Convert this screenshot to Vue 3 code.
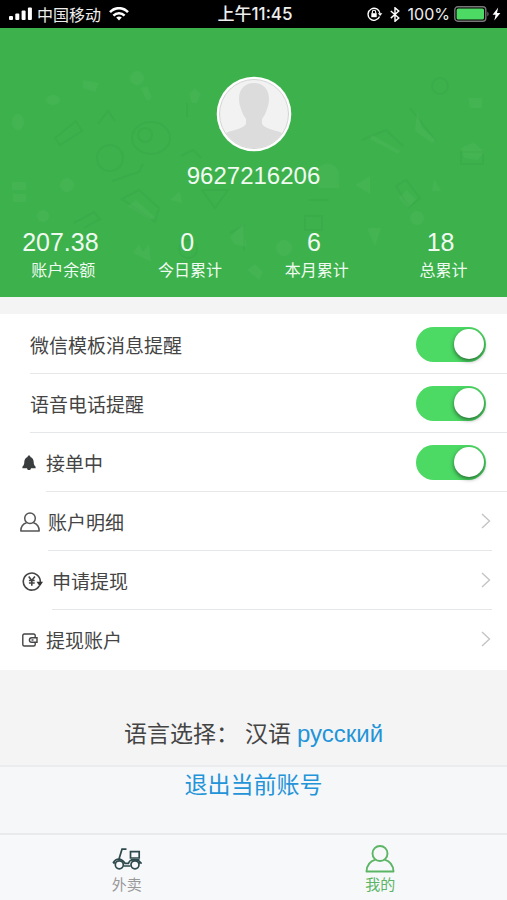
<script setup>
import { ref, reactive } from 'vue'

const stats = [
  { value: '207.38', label: '账户余额' },
  { value: '0', label: '今日累计' },
  { value: '6', label: '本月累计' },
  { value: '18', label: '总累计' },
]

const toggles = reactive([
  { id: 'wechat', label: '微信模板消息提醒', on: true },
  { id: 'voice', label: '语音电话提醒', on: true },
  { id: 'orders', label: '接单中', on: true, icon: 'bell' },
])

const links = [
  { id: 'detail', label: '账户明细', icon: 'person' },
  { id: 'withdraw', label: '申请提现', icon: 'yen' },
  { id: 'account', label: '提现账户', icon: 'wallet' },
]

const tab = ref('mine')
</script>

<template>
  <div class="page">
    <div class="status">
      <div class="status-side">
        <svg class="signal" width="24" height="14" viewBox="0 0 24 14" fill="#fff">
          <rect x="0" y="9" width="4" height="4" rx="1" />
          <rect x="6.3" y="6.5" width="4" height="6.5" rx="1" />
          <rect x="12.6" y="3.5" width="4" height="9.5" rx="1" />
          <rect x="18.9" y="0.5" width="4" height="12.5" rx="1" />
        </svg>
        <span class="carrier">中国移动</span>
        <svg class="wifi" width="20" height="14" viewBox="0 0 20 14" fill="none" stroke="#fff" stroke-width="2.5">
          <path d="M1 5.2C6-.2 14-.2 19 5.2" />
          <path d="M4.4 8.6c3.2-3.3 8-3.3 11.2 0" />
          <path d="M7.2 10.6c1.6-1.5 4-1.5 5.6 0L10 13.6z" fill="#fff" stroke="none" />
        </svg>
      </div>
      <div class="time">上午11:45</div>
      <div class="status-side end">
        <svg width="16" height="14" viewBox="0 0 16 14" fill="none" stroke="#fff">
          <path d="M12.6 9.6A6 6 0 1 1 13 6.5" stroke-width="1.4" />
          <path d="M10.8 6.2h4.6L13.1 9z" fill="#fff" stroke="none" />
          <rect x="4.3" y="6.2" width="5.4" height="4" fill="#fff" stroke="none" />
          <path d="M5.3 6.5V5a1.7 1.7 0 0 1 3.4 0v1.5" stroke-width="1.1" />
        </svg>
        <svg class="bt" width="10" height="15" viewBox="0 0 10 15" fill="none" stroke="#fff" stroke-width="1.4">
          <path d="M.8 4l8 7L5 14.3V.8l3.8 3.3-8 7" />
        </svg>
        <span class="percent">100%</span>
        <svg class="battery" width="36" height="16" viewBox="0 0 36 16">
          <rect x=".8" y=".8" width="31" height="14.4" rx="3" fill="none" stroke="#777" stroke-width="1.4" />
          <rect x="2.6" y="2.6" width="27.4" height="10.8" rx="1.5" fill="#4cd964" />
          <path d="M33.4 5.5q2.4 2.5 0 5z" fill="#777" />
        </svg>
        <svg width="9" height="14" viewBox="0 0 9 14" fill="#fff"><path d="M6.2.5L.6 7.8h3L2.3 13.5 8.4 6H5z" /></svg>
      </div>
    </div>

    <header class="hero">
      <svg class="pattern" viewBox="0 0 507 269" preserveAspectRatio="xMidYMid slice" aria-hidden="true">
        <g fill="#fff" opacity=".04">
          <circle cx="137" cy="50" r="7" />
          <path d="M141 60l6-2 5 12-5 3zM189 66l6-6 6 6-4 9h-5zM83 52l16 3-4 9-12-4z" />
          <ellipse cx="53" cy="72" rx="7" ry="5" />
          <ellipse cx="18" cy="94" rx="6" ry="8" />
          <circle cx="67" cy="157" r="7" />
          <path d="M170 172l10-9 2 12zM12 154h14v8H12zM13 166h13v8H13zM372 107l28 16-2 3-28-15zM355 157l15-9v18zM434 151l7 12h-9z" />
          <circle cx="43" cy="188" r="6" />
          <path d="M128 178l8-6 19 17-5 3zM133 225l6-9 4 8 6-8 2 18zM230 209l14-14 2 24-12-3z" />
          <path d="M316 148a11 11 0 0 1 23-2v14h-20zM399 170l8-8 9 10-8 8zM461 120l13-6 10 10-6 8-14-2zM468 70h14v10h-12z" />
          <circle cx="417" cy="190" r="7" />
          <circle cx="284" cy="220" r="8" />
          <path d="M247 242l8-6 8 8-4 8zM367 200h14l-6 18zM417 83l5 17 14 12-4 3-17-12z" />
        </g>
        <g fill="none" stroke="#174f21" stroke-width="2" opacity=".03">
          <ellipse cx="151" cy="110" rx="19" ry="16" />
          <circle cx="145" cy="107" r="7" />
          <path d="M55 110l21-17 6 10-22 14zM98 96l10-13 7 10M112 153l27-9 4-8M122 171l17-9 20 18-4 14zM202 162h26l-13 18zM309 172h20M305 188h17v14h-17zM362 112l24-10 17 16M410 80l26 33M461 124h22v12h-22zM396 158l10-6 14 18-11 9zM74 195l20-11 6 7-16 9M230 205l14-8v25M187 75v14M181 128l12-6 8 8" />
          <circle cx="188" cy="221" r="9" />
          <circle cx="440" cy="58" r="8" />
          <circle cx="110" cy="130" r="13" />
        </g>
      </svg>
      <svg class="avatar" width="76" height="76" viewBox="0 0 76 76" role="img" aria-label="头像">
        <defs><clipPath id="face"><circle cx="38" cy="38" r="34" /></clipPath></defs>
        <circle cx="38" cy="38" r="37.3" fill="#fff" />
        <circle cx="38" cy="38" r="34.5" fill="#f2f2f2" stroke="#d3d5d3" stroke-width="1" />
        <path clip-path="url(#face)" fill="#dcdcdc" d="M38 7c9 0 15 6 15 16 0 4-1 7-2 10-1 4-3 7-5 10v5c4 6 16 6 22 10v18H8V58c6-4 18-4 22-10v-5c-2-3-4-6-5-10-1-3-2-6-2-10C23 13 29 7 38 7z" />
      </svg>
      <div class="name">9627216206</div>
      <div class="stats">
        <div v-for="s in stats" :key="s.label" class="stat">
          <div class="value">{{ s.value }}</div>
          <div class="label">{{ s.label }}</div>
        </div>
      </div>
    </header>

    <main class="settings">
      <div class="list">
        <div v-for="t in toggles" :key="t.id" class="row">
          <span v-if="t.icon" class="icon-cell">
            <svg width="14" height="16" viewBox="0 0 14 16" fill="#3a3d3e">
              <path d="M7 .5c.9 0 1.4.6 1.4 1.4C10.6 2.700 11.700 4.700 11.700 7c0 2.200.6 3.400 1.900 4.700v1.500H9c-.2 1.200-.9 1.900-2 1.900s-1.800-.7-2-1.900H.4v-1.500C1.700 10.400 2.300 9.200 2.300 7c0-2.300 1.100-4.300 3.300-5.100C5.600 1.100 6.100.5 7 .5z" />
            </svg>
          </span>
          <span v-else class="icon-cell blank"></span>
          <div class="row-body">
            <label :for="t.id">{{ t.label }}</label>
            <input :id="t.id" v-model="t.on" class="switch" type="checkbox" role="switch" />
          </div>
        </div>
        <a v-for="l in links" :key="l.id" class="row link" href="#">
          <span class="icon-cell" :class="l.icon">
            <svg v-if="l.icon === 'person'" width="20" height="20" viewBox="0 0 20 20" fill="none" stroke="#555" stroke-width="1.5">
              <circle cx="10" cy="6.3" r="5.3" />
              <path d="M6.600 10.800C3.200 11.900.8 14.800.8 19h18.400c0-4.200-2.400-7.100-5.800-8.200" stroke-linejoin="round" />
            </svg>
            <svg v-else-if="l.icon === 'yen'" width="21" height="20" viewBox="0 0 21 20" fill="none" stroke="#444">
              <path d="M17.200 14.800A8.500 8.500 0 1 1 18.300 11" stroke-width="1.600" />
              <path d="M14.500 10.800h6.500l-3.200 4.700z" fill="#333" stroke="none" />
              <path d="M6.700 5.400L9.800 9.400l3.100-4M9.800 9.200v5.600M6.900 9.500h5.800M6.900 12h5.800" stroke-width="1.600" />
            </svg>
            <svg v-else width="16" height="14" viewBox="0 0 16 14" fill="none" stroke="#444" stroke-width="1.400">
              <path d="M13.200 4.300V2.500q0-1.500-1.500-1.500H2.300Q.8 1 .8 2.500v9Q.8 13 2.300 13h9.400q1.500 0 1.500-1.500V9.700" />
              <path d="M15 4.700v4.600H9.700a2.300 2.300 0 0 1 0-4.600z" />
              <path d="M9.500 7h2" />
            </svg>
          </span>
          <span class="row-body">
            <span>{{ l.label }}</span>
            <svg width="10" height="16" viewBox="0 0 10 16" fill="none" stroke="#c4c4c7" stroke-width="1.400"><path d="M1 1l7.500 7L1 15" /></svg>
          </span>
        </a>
      </div>

      <div class="language">
        <span>语言选择：</span>
        <span>汉语</span>
        <a class="foreign" href="#">русский</a>
      </div>
      <div class="logout"><button type="button">退出当前账号</button></div>
    </main>

    <nav class="tabs">
      <button type="button" class="tab" :class="{ active: tab === 'orders' }" @click="tab = 'orders'">
        <svg width="30" height="28" viewBox="0 0 30 28" fill="none" stroke="#2f4a4c" stroke-width="1.700">
          <path d="M14.500 4.200H10L7 14M18.500 6.700h8.700v6.300h-8.700zM19 14.800h8.500" />
          <path d="M1 18c1.500-2.500 3.500-3.900 6-3.900 3 0 4.600 2.200 6 4.200h3.500c.8-2.400 2.800-3.800 5.600-3.800 3.200 0 5.400 1.300 6.900 3.500h-2.500M11.500 21h7M1 18h2" />
          <circle cx="7.300" cy="19.800" r="4" />
          <circle cx="23" cy="19.800" r="4" />
        </svg>
        <span>外卖</span>
      </button>
      <button type="button" class="tab" :class="{ active: tab === 'mine' }" @click="tab = 'mine'">
        <svg width="30" height="28" viewBox="0 0 30 28" fill="none" stroke="#5cb565" stroke-width="1.900">
          <circle cx="15" cy="8.500" r="7.500" />
          <path d="M10.500 14.600C5.500 16 1.800 20 1.500 26.500h27C28.200 20 24.500 16 19.500 14.600" stroke-linejoin="round" />
        </svg>
        <span>我的</span>
      </button>
    </nav>
  </div>
</template>

<style>
body {
  margin: 0;
  background: #fff;
}
</style>

<style scoped>
.page {
  display: flex;
  flex-direction: column;
  min-height: 100vh;
  font-family: "Liberation Sans", "Noto Sans CJK SC", sans-serif;
  color: #444;
}
button {
  padding: 0;
  border: 0;
  background: none;
  font: inherit;
  cursor: pointer;
}
a {
  color: #2494d8;
  text-decoration: none;
}
svg {
  display: block;
  flex: none;
}

.status {
  display: grid;
  grid-template-columns: 1fr auto 1fr;
  align-items: center;
  height: 28px;
  padding: 0 6px 0 9px;
  background: #000;
  color: #eee;
  font-size: 16px;
  line-height: 28px;
}
.status-side {
  display: flex;
  align-items: center;
}
.end {
  justify-content: flex-end;
}
.signal {
  margin-right: 4px;
}
.carrier {
  font-family: "Noto Sans CJK SC", sans-serif;
}
.wifi {
  margin-left: 8px;
}
.time {
  font-family: Inter, "Noto Sans CJK SC", sans-serif;
  font-size: 17px;
  font-weight: 500;
}
.bt {
  margin-left: 7px;
}
.percent {
  margin: 0 4px 0 8px;
  font-family: Inter, sans-serif;
}
.battery {
  margin-right: 2px;
}

.hero {
  position: relative;
  display: flex;
  flex-direction: column;
  align-items: center;
  padding: 48px 0 10px;
  background: #3cb14c;
  color: #f0faf1;
}
.pattern {
  position: absolute;
  inset: 0;
  width: 100%;
  height: 100%;
}
.avatar,
.name,
.stats {
  position: relative;
}
.name {
  margin-top: 10px;
  font-size: 24px;
  line-height: 28px;
}
.stats {
  display: grid;
  grid-template-columns: repeat(4, 1fr);
  width: 100%;
  margin-top: 38px;
  text-align: center;
}
.value {
  padding-right: 6px;
  font-size: 25px;
  line-height: 28px;
}
.label {
  padding-bottom: 2px;
  font-size: 16px;
  line-height: 29px;
}

.settings {
  flex: 1;
  padding-top: 17px;
  background: #f4f4f5;
  display: flex;
  flex-direction: column;
}
.list {
  padding: 1px 0;
  background: #fff;
  font-size: 19px;
}
.row {
  display: flex;
  height: 59px;
  color: #444;
}
.icon-cell {
  display: flex;
  align-items: center;
  width: 24px;
  margin-left: 22px;
}
.icon-cell.blank {
  width: 8px;
}
.icon-cell.person {
  width: 28px;
  margin-left: 20px;
}
.icon-cell.yen {
  width: 30px;
}
.row-body {
  flex: 1;
  display: flex;
  align-items: center;
  justify-content: space-between;
  padding-right: 21px;
  border-bottom: 1px solid #e6e7e8;
}
.link .row-body {
  margin-right: 15px;
  padding-right: 1px;
}
.link:last-child .row-body {
  border-color: transparent;
}
.switch {
  appearance: none;
  box-sizing: border-box;
  display: flex;
  width: 70px;
  height: 35px;
  margin: 0;
  padding: 2px;
  border-radius: 18px;
  background: #d5d5d8;
  cursor: pointer;
}
.switch::before {
  content: "";
  width: 30px;
  height: 30px;
  border-radius: 50%;
  background: #fff;
  box-shadow: 0 2px 4px rgba(0, 0, 0, 0.5);
}
.switch:checked {
  justify-content: flex-end;
  background: #4cd964;
}

.language {
  display: flex;
  justify-content: center;
  gap: 6px;
  padding: 49px 0 16px;
  border-bottom: 2px solid #ebecee;
  font-size: 23px;
  line-height: 30px;
}
.foreign {
  font-size: 24px;
}
.logout {
  flex: 1;
  padding: 3px 0 32px;
  background: #f6f7f9;
  text-align: center;
  font-size: 23px;
  line-height: 30px;
}
.logout button {
  color: #2494d8;
}

.tabs {
  display: grid;
  grid-template-columns: 1fr 1fr;
  border-top: 2px solid #e9eaec;
  background: #f7f8fa;
}
.tab {
  display: flex;
  flex-direction: column;
  align-items: center;
  padding: 10px 0 4px;
  color: #999;
  font-size: 15px;
  line-height: 23px;
}
.tab.active {
  color: #5cb565;
}
</style>
